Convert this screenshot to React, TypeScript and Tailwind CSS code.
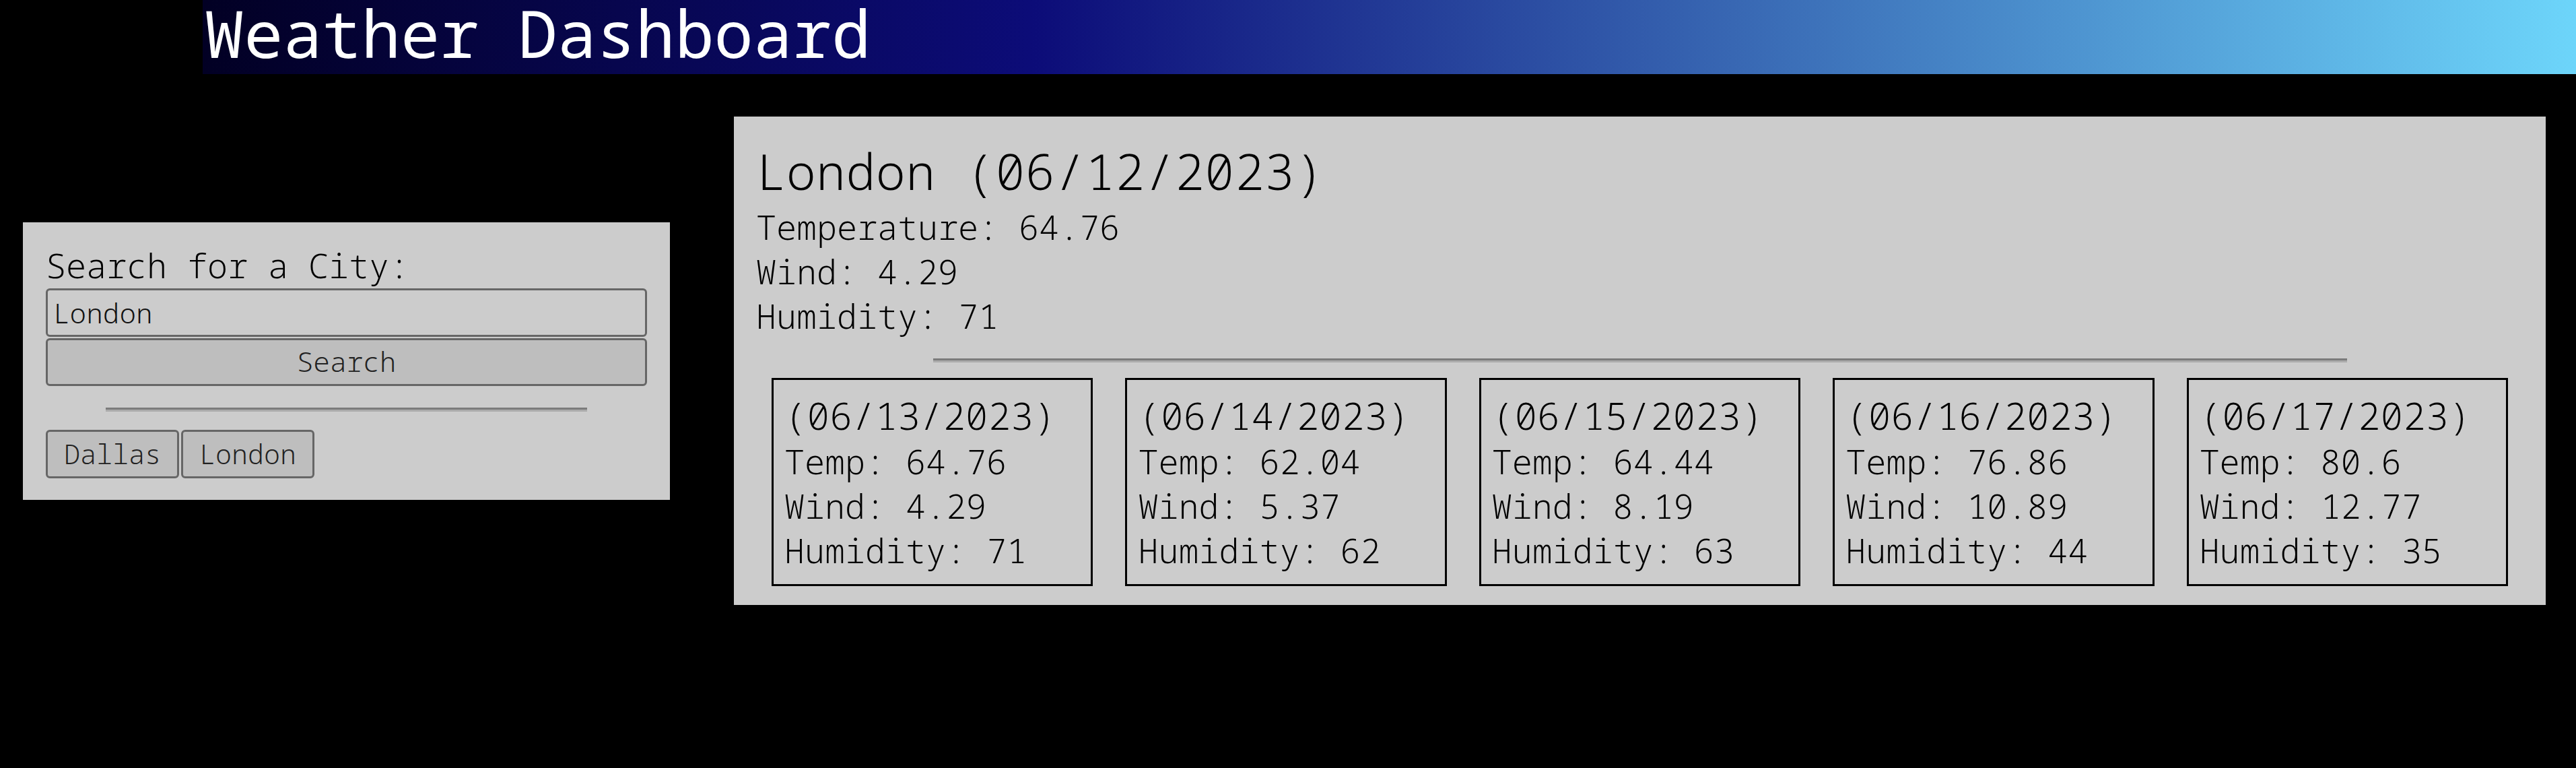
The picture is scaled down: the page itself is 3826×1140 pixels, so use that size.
import React from 'react';

type Day = { date: string; temp: string; wind: string; humidity: string };

const forecast: Day[] = [
  { date: '06/13/2023', temp: '64.76', wind: '4.29', humidity: '71' },
  { date: '06/14/2023', temp: '62.04', wind: '5.37', humidity: '62' },
  { date: '06/15/2023', temp: '64.44', wind: '8.19', humidity: '63' },
  { date: '06/16/2023', temp: '76.86', wind: '10.89', humidity: '44' },
  { date: '06/17/2023', temp: '80.6', wind: '12.77', humidity: '35' },
];

const history = ['Dallas', 'London'];

// inset-looking rule like the browser default hr
const Rule = () => (
  <hr className="mx-auto w-4/5 h-0 border-0 border-t-[3px] border-t-[#7b7b7b] border-b-[3px] border-b-[#ababab]" />
);

const App: React.FC = () => {
  return (
    <div className="h-[1140px] bg-black font-['Noto_Sans_Mono','DejaVu_Sans_Mono',monospace] font-light text-black overflow-hidden">
      <header className="ml-[301px] h-[110px] bg-[linear-gradient(to_right,#020024_0%,#0c0c78_35%,#6dd5fa_100%)]">
        <h1 className="pl-[3px] text-[97px] leading-[96px] text-white font-normal">Weather Dashboard</h1>
      </header>

      <div className="mt-[63px] flex items-center pl-[34px] pr-[45px] gap-[95px]">
        {/* search panel */}
        <aside className="w-[961px] shrink-0 bg-[#cccccc] pt-[35px] px-[34px] pb-[32px]">
          <label className="block text-[50px] leading-[58px]">Search for a City:</label>
          <input
            readOnly
            value="London"
            className="mt-[5px] block w-full h-[72px] rounded-[6px] border-[3px] border-[#666666] bg-[#cccccc] pl-[8px] text-[41px] text-[#111111] outline-none"
          />
          <button className="mt-[2px] block w-full h-[71px] rounded-[6px] border-[3px] border-[#666666] bg-[#bebebe] text-[41px] text-[#222222]">
            Search
          </button>
          <div className="mt-[32px]">
            <Rule />
          </div>
          <div className="mt-[27px] flex gap-[3px]">
            {history.map((c) => (
              <button
                key={c}
                className="h-[72px] px-[24px] rounded-[6px] border-[3px] border-[#666666] bg-[#bebebe] text-[40px] text-[#222222]"
              >
                {c}
              </button>
            ))}
          </div>
        </aside>

        {/* current weather + forecast */}
        <main className="flex-1 bg-[#cccccc] pt-[39px] px-[33px] pb-[28px]">
          <h2 className="text-[74px] leading-[84px] font-light">London (06/12/2023)</h2>
          <div className="mt-[8px] text-[50px] leading-[66px]">
            <p>Temperature: 64.76</p>
            <p>Wind: 4.29</p>
            <p>Humidity: 71</p>
          </div>
          <div className="mt-[30px]">
            <Rule />
          </div>
          <div className="mt-[23px] flex gap-[48px] px-[23px]">
            {forecast.map((d) => (
              <div key={d.date} className="flex-1 border-[3px] border-black pt-[17px] pl-[16px] pb-[17px]">
                <h3 className="text-[56px] leading-[71px] font-light">({d.date})</h3>
                <p className="text-[50px] leading-[66px]">Temp: {d.temp}</p>
                <p className="text-[50px] leading-[66px]">Wind: {d.wind}</p>
                <p className="text-[50px] leading-[66px]">Humidity: {d.humidity}</p>
              </div>
            ))}
          </div>
        </main>
      </div>
    </div>
  );
};

export default App;
